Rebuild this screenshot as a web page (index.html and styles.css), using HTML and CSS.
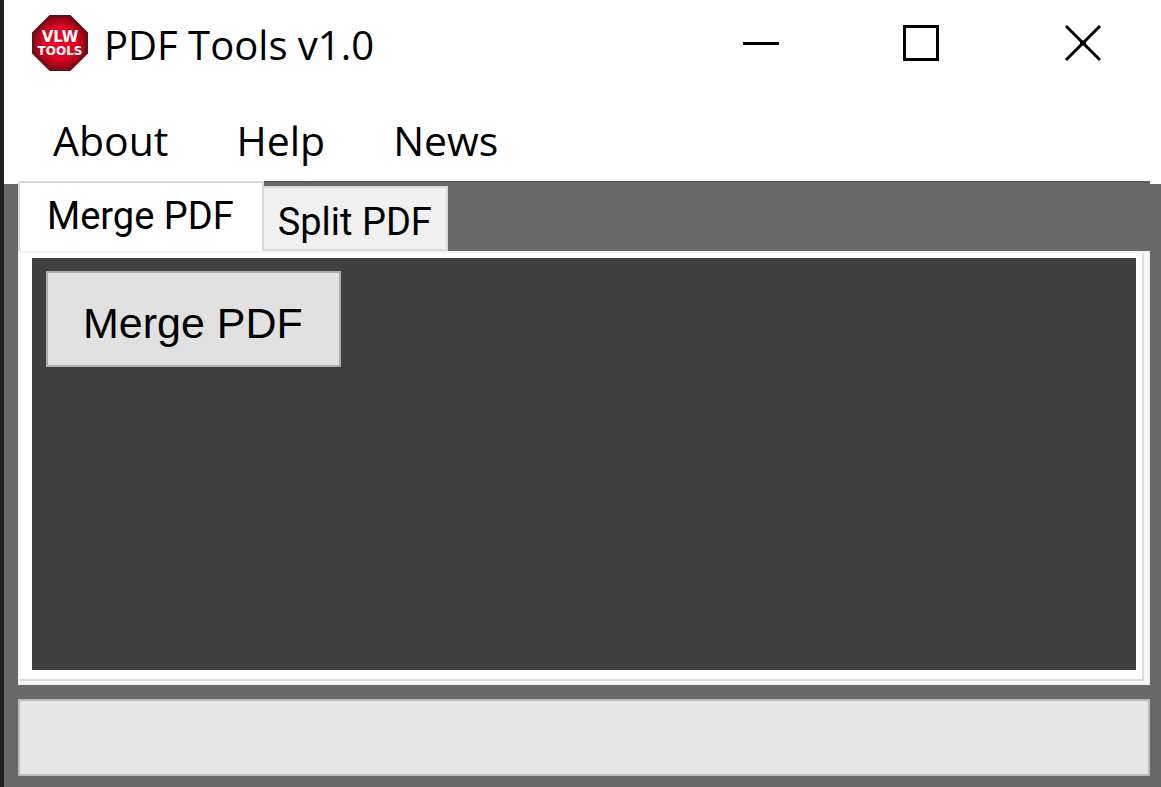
FILE: index.html
```html
<!DOCTYPE html>
<html lang="en">
<head>
<meta charset="utf-8">
<meta name="viewport" content="width=device-width, initial-scale=1">
<title>PDF Tools v1.0</title>
<link rel="stylesheet" href="styles.css">
</head>
<body>
<div class="window">
  <header class="titlebar">
    <svg class="app-icon" viewBox="0 0 56 56" aria-hidden="true">
      <defs>
        <radialGradient id="badge" cx="50%" cy="50%" r="52%">
          <stop offset="0" stop-color="#f0052a"/>
          <stop offset="0.6" stop-color="#d80522"/>
          <stop offset="1" stop-color="#7d0812"/>
        </radialGradient>
      </defs>
      <path d="M18 1H38L55 18V38L38 55H18L1 38V18Z" fill="url(#badge)" stroke="#641016" stroke-width="2"/>
      <text class="logo-text" x="28" y="27" font-size="15" text-anchor="middle">VLW</text>
      <text class="logo-text" x="28" y="40" font-size="12" text-anchor="middle">TOOLS</text>
    </svg>
    <h1 class="title">PDF Tools v1.0</h1>
    <div class="controls">
      <button class="control" type="button" aria-label="Minimize">
        <svg class="glyph" viewBox="0 0 36 36"><path d="M0 18.5H36" stroke-width="3"/></svg>
      </button>
      <button class="control" type="button" aria-label="Maximize">
        <svg class="glyph" viewBox="0 0 36 36"><path d="M1.5 1.5H34.5V34.5H1.5Z" stroke-width="3"/></svg>
      </button>
      <button class="control" type="button" aria-label="Close">
        <svg class="glyph" viewBox="0 0 36 36"><path d="M3 1L37 35M37 1L3 35" stroke-width="3"/><path d="M17 18H23" stroke-width="5"/></svg>
      </button>
    </div>
  </header>
  <nav class="menubar" aria-label="Main">
    <button class="menu-item" type="button">About</button>
    <button class="menu-item" type="button">Help</button>
    <button class="menu-item" type="button">News</button>
  </nav>
  <main class="client">
    <div class="tabs" role="tablist">
      <button class="tab tab-active" type="button" role="tab" id="tab-merge" aria-selected="true" aria-controls="panel-merge">Merge PDF</button>
      <button class="tab" type="button" role="tab" id="tab-split" aria-selected="false">Split PDF</button>
    </div>
    <div class="frame">
      <section class="panel" role="tabpanel" id="panel-merge" aria-labelledby="tab-merge">
        <button class="action" type="button">Merge PDF</button>
      </section>
    </div>
    <div class="status" role="status"></div>
  </main>
</div>
</body>
</html>
```
FILE: styles.css
```css
* {
  box-sizing: border-box;
}

body {
  margin: 0;
  min-height: 100vh;
  display: flex;
  padding-left: 4px;
  background: #1d2025;
  color: #000;
  font-family: "Open Sans", "Noto Sans", sans-serif;
}

button {
  margin: 0;
  border: 0;
  background: none;
  color: inherit;
  font: inherit;
}

.window {
  flex: 1;
  display: flex;
  flex-direction: column;
  background: #696969;
}

.titlebar {
  display: flex;
  align-items: center;
  height: 86px;
  padding-left: 28px;
  background: #fff;
}

.app-icon {
  width: 56px;
  height: 56px;
}

.logo-text {
  fill: #fff;
  font-family: "DejaVu Sans", sans-serif;
  font-weight: bold;
}

.title {
  flex: 1;
  margin: 0 0 0 16px;
  padding-top: 4px;
  font-size: 40px;
  font-weight: 400;
  line-height: 48px;
}

.controls {
  display: flex;
}

.control {
  display: flex;
  align-items: center;
  justify-content: center;
  width: 160px;
  height: 86px;
  padding: 0;
}

.glyph {
  width: 36px;
  height: 36px;
  fill: none;
  overflow: visible;
  stroke: #000;
}

.menubar {
  display: flex;
  gap: 68px;
  height: 98px;
  padding: 30px 49px 20px;
  background: #fff;
}

.menu-item {
  padding: 0;
  font-size: 41px;
  line-height: 48px;
}

.client {
  flex: 1;
  display: flex;
  flex-direction: column;
  margin-top: -3px;
  padding: 0 11px 11px 14px;
}

.tabs {
  display: flex;
  align-items: flex-end;
  height: 70px;
  background: #696969;
  border-top: 2px solid #5c5c5c;
}

.tab {
  height: 65px;
  margin-left: -2px;
  padding: 6px 14px 0;
  border: 2px solid #d9d9d9;
  background: #f0f0f0;
  font-family: Roboto, sans-serif;
  font-size: 38px;
  line-height: 48px;
}

.tab-active {
  height: 70px;
  margin-left: 0;
  padding: 0 28px 2px 27px;
  border-bottom: 0;
  background: #fff;
}

.frame {
  flex: 1;
  display: flex;
  padding: 5px 6px 13px 12px;
  border: 2px solid #f2f2f2;
  background: #fff;
  box-shadow: inset -4px -2px #f8f8f8, inset -6px -4px #dcdcdc;
}

.panel {
  flex: 1;
  margin-right: 6px;
  padding: 13px 14px;
  background: #404040;
}

.action {
  height: 96px;
  padding: 8px 36px 0 35px;
  border: 2px solid #adadad;
  background: #e1e1e1;
  font-family: "Liberation Sans", Arial, sans-serif;
  font-size: 43px;
  line-height: 48px;
}

.status {
  height: 77px;
  margin-top: 14px;
  border: 2px solid #bcbcbc;
  background: #e6e6e6;
}
```
